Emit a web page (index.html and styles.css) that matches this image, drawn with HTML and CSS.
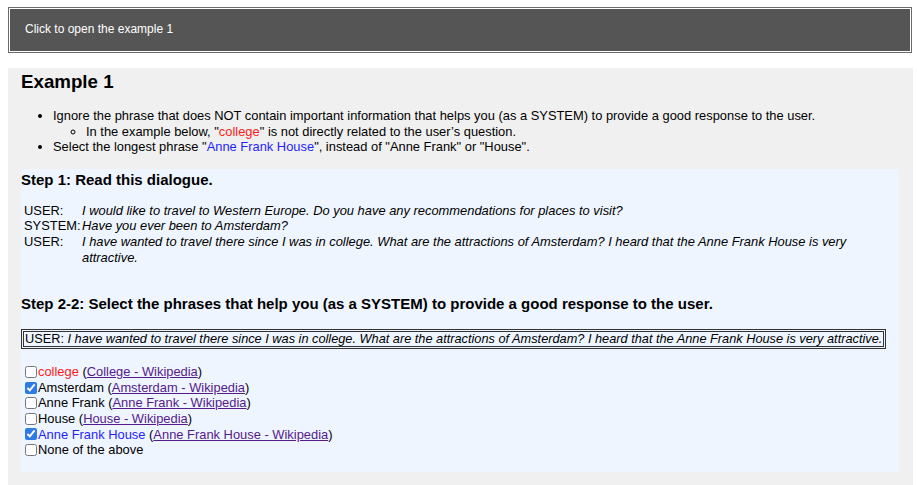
FILE: index.html
```html
<!DOCTYPE html>
<html>
<head>
<meta charset="utf-8">
<link rel="stylesheet" href="styles.css">
</head>
<body>
<div class="toggle">Click to open the example 1</div>
<div class="panel">
  <h3 class="title">Example 1</h3>
  <ul class="rules">
    <li>Ignore the phrase that does NOT contain important information that helps you (as a SYSTEM) to provide a good response to the user.
      <ul class="sub">
        <li>In the example below, "<span class="red">college</span>" is not directly related to the user’s question.</li>
      </ul>
    </li>
    <li>Select the longest phrase "<span class="blue">Anne Frank House</span>", instead of "Anne Frank" or "House".</li>
  </ul>
  <div class="task">
    <h4 class="step step1">Step 1: Read this dialogue.</h4>
    <div class="dialogue">
      <span class="who">USER:</span><span class="say">I would like to travel to Western Europe. Do you have any recommendations for places to visit?</span>
      <span class="who">SYSTEM:</span><span class="say">Have you ever been to Amsterdam?</span>
      <span class="who">USER:</span><span class="say">I have wanted to travel there since I was in college. What are the attractions of Amsterdam? I heard that the Anne Frank House is very attractive.</span>
    </div>
    <h4 class="step step2">Step 2-2: Select the phrases that help you (as a SYSTEM) to provide a good response to the user.</h4>
    <div class="quote">USER: <i>I have wanted to travel there since I was in college. What are the attractions of Amsterdam? I heard that the Anne Frank House is very attractive.</i></div>
    <div class="choices">
      <label class="choice"><input type="checkbox"><span class="red">college</span>&nbsp;(<a href="#">College - Wikipedia</a>)</label>
      <label class="choice"><input type="checkbox" checked>Amsterdam (<a href="#">Amsterdam - Wikipedia</a>)</label>
      <label class="choice"><input type="checkbox">Anne Frank (<a href="#">Anne Frank - Wikipedia</a>)</label>
      <label class="choice"><input type="checkbox">House (<a href="#">House - Wikipedia</a>)</label>
      <label class="choice"><input type="checkbox" checked><span class="blue">Anne Frank House</span>&nbsp;(<a href="#">Anne Frank House - Wikipedia</a>)</label>
      <label class="choice"><input type="checkbox">None of the above</label>
    </div>
  </div>
</div>
</body>
</html>
```
FILE: styles.css
```css
html, body {
  margin: 0;
  padding: 0;
  background: #ffffff;
}
body {
  font-family: "Liberation Sans", Arial, sans-serif;
  font-size: 12.9px;
  line-height: 15.6px;
  color: #000;
  padding: 7px 6px 0 8px;
}
.toggle {
  box-sizing: border-box;
  height: 46px;
  border: 1px solid #6a6a6a;
  box-shadow: inset 0 0 0 1px #ffffff;
  background: #555555;
  color: #ffffff;
  font-size: 12px;
  line-height: 43px;
  padding: 0 0 0 16px;
}
.panel {
  margin-top: 15px;
  margin-right: -1px;
  background: #f0f0f0;
  padding: 3px 14px 20px 13px;
}
.title {
  margin: 0;
  font-size: 18.72px;
  line-height: 22px;
  font-weight: bold;
}
.rules {
  margin: 15px 0 14px 0;
  padding-left: 32px;
  list-style: disc;
}
.sub {
  margin: 0;
  padding-left: 33px;
  list-style: circle;
}
.red { color: #ff1a1a; }
.blue { color: #1f1fff; }
.task {
  background: #eef5ff;
  padding: 2px 0 14px 0;
}
.step {
  margin: 0;
  font-size: 15px;
  line-height: 18px;
  font-weight: bold;
}
.dialogue {
  display: grid;
  grid-template-columns: 58px 1fr;
  margin: 14px 20px 0 3px;
}
.who {
  white-space: nowrap;
}
.say {
  font-style: italic;
}
.step2 {
  margin-top: 30px;
}
.quote {
  display: inline-block;
  white-space: nowrap;
  margin-top: 16px;
  border: 3px double #333;
  padding: 0 1px;
  font-size: 12.75px;
  line-height: 14px;
}
.choices {
  margin-top: 15px;
  display: flex;
  flex-direction: column;
}
.choice {
  display: flex;
  align-items: center;
  height: 15.6px;
}
.choice input {
  width: 12px;
  height: 12px;
  margin: 0 1px 0 4px;
  accent-color: #2f7be6;
}
.choice a {
  color: #551a8b;
  text-decoration: underline;
}
```
